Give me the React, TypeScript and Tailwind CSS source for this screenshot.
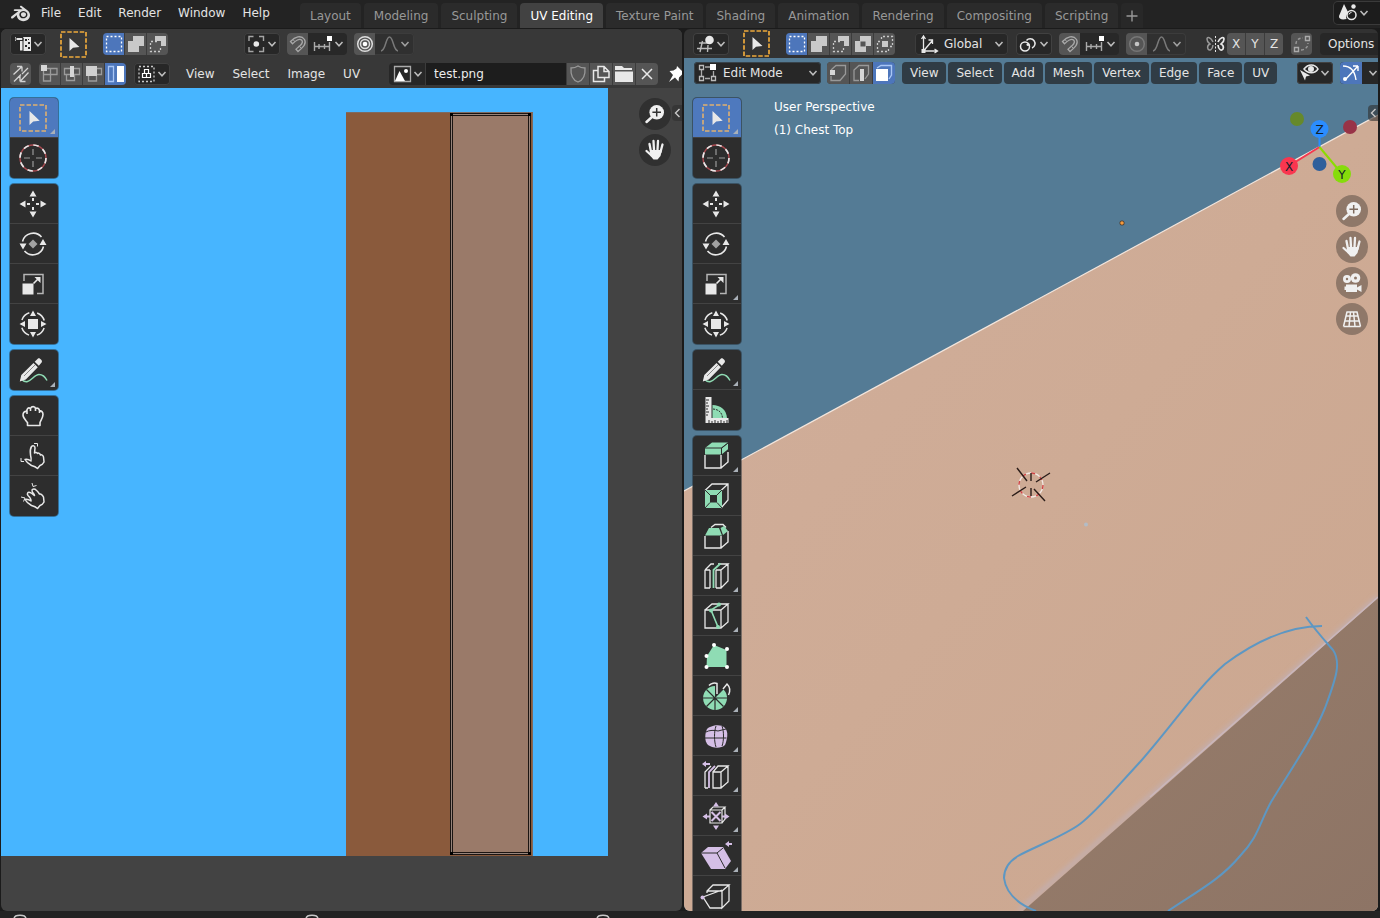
import type { ReactNode } from "react";
import { SiBlender } from "react-icons/si";

const workspaces = [
  "Layout",
  "Modeling",
  "Sculpting",
  "UV Editing",
  "Texture Paint",
  "Shading",
  "Animation",
  "Rendering",
  "Compositing",
  "Scripting",
];

const G = "#8fdcb4";
const P = "#d5bfe6";
const W = "#e8e8e8";

function Svg({ s = 22, children }: { s?: number; children: ReactNode }) {
  return (
    <svg width={s} height={s} viewBox={`0 0 ${s} ${s}`} fill="none" className="shrink-0" aria-hidden>
      {children}
    </svg>
  );
}

function Chevron() {
  return (
    <svg width="10" height="10" viewBox="0 0 10 10" fill="none" className="shrink-0" aria-hidden>
      <path d="M1.500 3 5 6.800 8.500 3" stroke="#bdbdbd" strokeWidth="1.500" />
    </svg>
  );
}

function Drop({ label, children }: { label: string; children: ReactNode }) {
  return (
    <button aria-label={label} className="flex h-[22px] w-9 shrink-0 items-center rounded bg-[#272727] pl-px ring-1 ring-inset ring-[#414141]">
      {children}
      <Chevron />
    </button>
  );
}

function Tile({ label, on, wide, children }: { label: string; on?: boolean; wide?: boolean; children: ReactNode }) {
  return (
    <button
      aria-label={label}
      className={`flex h-[22px] shrink-0 items-center justify-center ${wide ? "w-[22px]" : "w-[21px]"} ${on ? "bg-[#4d76bb]" : "bg-[#555555]"}`}
    >
      {children}
    </button>
  );
}

function Group({ children }: { children: ReactNode }) {
  return <div className="flex shrink-0 gap-px overflow-hidden rounded bg-[#3c3c3c]">{children}</div>;
}

/* header icons, 22px grid */

function TweakIcon() {
  return (
    <svg width="27" height="27" viewBox="0 0 27 27" fill="none" className="shrink-0" aria-hidden>
      <rect x="1" y="1" width="25" height="25" stroke="#eda93b" strokeWidth="1.7" strokeDasharray="4.5 1.75" />
      <path d="M9.500 7v13l3.500-3.300 6.500-.7z" fill={W} />
    </svg>
  );
}

function SelNew() {
  return (
    <Svg>
      <rect x="3.500" y="3.500" width="15" height="15" stroke="#fff" strokeWidth="1.3" strokeDasharray="2 2" />
    </Svg>
  );
}

function SelAdd() {
  return (
    <Svg>
      <path d="M8 3h11v10h-5v6H3V8h5z" fill="#c9c9c9" />
    </Svg>
  );
}

function SelSub() {
  return (
    <Svg>
      <path d="M8 3h11v10h-5V8H8z" fill="#c9c9c9" />
      <path d="M10 8.500H3.500v10h10v-4" stroke="#c9c9c9" strokeWidth="1.300" strokeDasharray="2 2" />
    </Svg>
  );
}

function SelDiff() {
  return (
    <Svg>
      <path fillRule="evenodd" d="M8 3h11v10h-5v6H3V8h5zM8.500 8.500v5h5v-5z" fill="#c9c9c9" />
    </Svg>
  );
}

function SelInt() {
  return (
    <Svg>
      <path d="M8 8h6v6H8z" fill="#c9c9c9" />
      <path d="M7.500 6V3.500h11v10H16M14.500 16v2.500h-11v-10H6" stroke="#c9c9c9" strokeWidth="1.300" strokeDasharray="2 2" />
    </Svg>
  );
}

function UvEditorIcon() {
  return (
    <Svg>
      <path d="M4 4h16v14H9V8H4z" fill={W} />
      <path d="M5 4.500h7v3H5zM8 7v11h4V5" stroke="#272727" />
      <path d="M14 6h2v2h-2zM17 9h2v2h-2zM14 12h2v2h-2zM17 6h1v1h-1zM17 14h2v2h-2z" fill="#272727" />
    </Svg>
  );
}

function ViewEditorIcon() {
  return (
    <Svg>
      <path d="M5 10h9M3 15.500h15M8.500 8 6 19M14 12l-.5 7" stroke="#bbb" strokeWidth="1.400" />
      <circle cx="15.500" cy="7" r="4.300" fill={W} />
    </Svg>
  );
}

function PivotIcon() {
  return (
    <Svg>
      <path d="M4 8V3.500h4.500M14 3.500h4.500V8M18.500 14v4.500H14M8.500 18.500H4V14" stroke="#a5a5a5" strokeWidth="1.400" />
      <circle cx="11.300" cy="11" r="2.800" fill={W} />
    </Svg>
  );
}

function PivotLinkIcon() {
  return (
    <Svg>
      <circle cx="8" cy="13.500" r="4.500" stroke={W} strokeWidth="1.500" />
      <path d="M9.500 7.500a4.800 4.800 0 1 1 5.500 7.500" stroke={W} strokeWidth="1.500" />
      <circle cx="11" cy="11.500" r="1.500" fill={W} />
    </Svg>
  );
}

function MagnetIcon() {
  return (
    <Svg>
      <path
        d="M3.500 8.500C8 4 14 1.500 17.500 6.500c2.500 4.500-2 8-6.500 12l-2-2.200c3.500-3.300 8-6 6-8.800C12.500 4.500 8.500 8 5.500 10.800z"
        stroke="#a8a8a8"
        strokeWidth="1.300"
      />
      <path d="m6 6.500 2 2.300M12 12.800l2.300 2.500" stroke="#a8a8a8" />
    </Svg>
  );
}

function SnapToIcon() {
  return (
    <Svg>
      <path d="M2.500 9v9M7 11v5M12.500 11v5M17.500 9v9M2.500 13.500h15" stroke="#aaa" strokeWidth="1.400" />
      <path d="M15 3h5v5h-5z" fill="#fff" />
    </Svg>
  );
}

function ProportionalIcon({ on }: { on?: boolean }) {
  return (
    <Svg>
      <circle cx="11" cy="11" r="7.300" stroke={on ? "#ddd" : "#777"} strokeWidth="1.500" />
      {on && <circle cx="11" cy="11" r="4.500" stroke="#ddd" strokeWidth="1.500" />}
      <circle cx="11" cy="11" r="2.300" fill={on ? "#fff" : "#c4c4c4"} />
    </Svg>
  );
}

function FalloffIcon() {
  return (
    <Svg>
      <path d="M3 18c5-.5 4.500-14 8.500-14s3.500 13.500 8.500 14" stroke="#8d8d8d" strokeWidth="1.500" />
    </Svg>
  );
}

function Snapping() {
  return (
    <div className="flex h-[22px] w-[60px] shrink-0 items-center overflow-hidden rounded bg-[#282828]">
      <Tile label="Snap">
        <MagnetIcon />
      </Tile>
      <button aria-label="Snapping" className="flex items-center pl-1">
        <SnapToIcon />
        <Chevron />
      </button>
    </div>
  );
}

function Proportional({ on }: { on?: boolean }) {
  return (
    <div className="flex h-[22px] w-[60px] shrink-0 items-center overflow-hidden rounded bg-[#303030] ring-1 ring-inset ring-[#3c3c3c]">
      <Tile label="Proportional editing">
        <ProportionalIcon on={on} />
      </Tile>
      <button aria-label="Falloff" className="flex items-center pl-[3px] opacity-80">
        <FalloffIcon />
        <Chevron />
      </button>
    </div>
  );
}

/* toolbar icons, 30px grid */

const tools: Record<string, ReactNode> = {
  "Select box": (
    <>
      <rect x="2" y="2" width="26" height="26" stroke="#e0b070" strokeWidth="1.600" strokeDasharray="4.500 2" />
      <path d="M11.500 8v14l3.700-3.500 6.500-.8z" fill={W} />
    </>
  ),
  Cursor: (
    <>
      <circle cx="15" cy="15" r="13" stroke="#a94a50" strokeWidth="1.400" />
      <circle cx="15" cy="15" r="13" stroke={W} strokeWidth="1.700" strokeDasharray="5.500 4.700" />
      <path d="M15 6v6M15 18v6M6 15h6M18 15h6" stroke="#999" strokeWidth="1.200" />
    </>
  ),
  Move: (
    <>
      <path d="m15 1.500 3.500 6h-7zM15 28.500l3.500-6h-7zM1.500 15l6-3.500v7zM28.500 15l-6-3.500v7z" fill={W} />
      <path d="M15 9v3M15 18v3M9 15h3M18 15h3" stroke={W} strokeWidth="2" />
    </>
  ),
  Rotate: (
    <>
      <path d="M4.500 12.500a11 11 0 0 1 19-4.500M25.500 17.500a11 11 0 0 1-19 4.500" stroke={W} strokeWidth="1.600" />
      <path d="M1.500 14.500h7l-3.500 6zM21.500 16h7L25 10z" fill={W} />
      <path d="m15 10.500 4.500 4.500-4.500 4.500-4.500-4.500z" fill="#a2a2a2" />
    </>
  ),
  Scale: (
    <>
      <path d="M6 12V5.500h19v19h-6" stroke="#b5b5b5" strokeWidth="1.500" />
      <path d="M4.500 14.500h11v11h-11zM22.500 8v6l-6-6z" fill={W} />
      <path d="m15.500 14.500 5-5" stroke={W} strokeWidth="1.600" />
    </>
  ),
  Transform: (
    <>
      <circle cx="15" cy="15" r="11.800" stroke={W} strokeWidth="1.500" strokeDasharray="10.500 8" strokeDashoffset="-4" />
      <path d="M10 10h10v10H10zM15 1.500l3 5.500h-6zM15 28.500l3-5.500h-6zM1.500 15 7 12v6zM28.500 15 23 12v6z" fill={W} />
    </>
  ),
  Annotate: (
    <>
      <path d="M3 24c8 8 12-4.500 18-4.500 4 0 6 2 8 6" stroke={G} strokeWidth="1.500" />
      <path d="m1.800 26.500 1.500-6.500L15.500 8l4.300 4.300L7.800 24.500zM16.700 6.800 20 3.500c1.500-1.200 4.800 2 3.800 3.800l-3 3.500z" fill={W} />
      <path d="m6 21 11-11" stroke="#888" />
    </>
  ),
  Grab: (
    <path
      d="M9.500 24.500v-3C7.500 19 5 17 5 14c0-2.500 1.500-4 4-3.500C8.500 7.500 10.500 6 12.500 7.500c1-2.500 4.500-2.500 5 0 2-1 4 0 4 2.500 2-.5 3.500 1 3.500 3.500 0 3-2 5.500-3 8v3zM9 10.500V13M12.500 7.500V10M17.500 7.500V10M21.500 10v2"
      stroke={W}
      strokeWidth="1.600"
      strokeLinejoin="round"
    />
  ),
  Relax: (
    <>
      <path
        d="M7 18.500c2-.5 4 0 6 1.500.5-2 0-4-.5-6C12 11 12 8 13.500 5.500c1.500-1.500 3.500-.5 3.500 1.500l-.5 5c1-1 2.500-.5 3 .5 1-1 2.500 0 3 1.500 1.500-.5 2.500.5 3 2l.5 5c-1 2-2.500 3-4 3.500L19.500 27.500c-2-2-4-2.500-6-3-2.500-1.500-5-3-6.500-6z"
        stroke={W}
        strokeWidth="1.500"
        strokeLinejoin="round"
      />
      <path d="M16 2.500h3.500v3M3 17v3.500h3" stroke={W} />
    </>
  ),
  Pinch: (
    <>
      <path
        d="M7 18.500c2-.5 4 0 6 1.500.5-2-1-3.500-3-5.500-1.500-2 0-4 2-3 2 .5 3 2 4.500 3 0-2-3-3-2.500-5.500.5-1.500 3-1.500 4 0 1.500 1 2.500 2.500 3.500 4 1.500-.5 3 1 4 3l.5 5c-1 2-2.500 3-4 3.500L19.500 27.500c-2-2-4-2.500-6-3-2.500-1.500-5-3-6.500-6z"
        stroke={W}
        strokeWidth="1.500"
        strokeLinejoin="round"
      />
      <path d="m14 2 1 3.500 3.500-1M3 16l4 1-1.500 3.500" stroke={W} />
    </>
  ),
  Measure: (
    <>
      <path d="M4.500 2h6v24h-6zM4.500 23h23v5h-23z" fill={W} />
      <path d="M5 5h3M5 8h2M5 11h3M5 14h2M5 17h3M5 20h2M8 28v-3M11 28v-2M14 28v-3M17 28v-2M20 28v-3M23 28v-2M26 28v-3" stroke="#2c2c2c" />
      <path d="M11.500 10c8 0 14 5 14.500 13H11.500z" fill={G} />
      <path d="M12 14c6 .5 9 3.500 9.500 9" stroke="#2c2c2c" strokeDasharray="2 1" />
    </>
  ),
  "Extrude region": (
    <>
      <path d="M4 14v13h16V14M20 27l7-6V11" stroke={W} strokeWidth="1.400" />
      <path d="m4 7 7-5.500h16l-7 5.500v6.500H4zM20.800 7.500 27 2.300v6l-6.200 5z" fill={G} />
      <path d="M4 7h16.500L27 2M20.500 7v6.500" stroke="#2c2c2c" />
    </>
  ),
  "Inset faces": (
    <>
      <path d="M4 9.500 11 3h16v16l-7 8M20 9.500 27 3" stroke={W} strokeWidth="1.300" />
      <path fillRule="evenodd" d="M4 9h17v18H4zM9 14v7.500h7V14z" fill={G} />
      <path d="m4 9 5 5M21 9l-5 5M4 27l5-5.500M21 27l-5-5.500" stroke="#2c2c2c" />
    </>
  ),
  Bevel: (
    <>
      <path d="M4 15v12h16V15M20 27l7-6V10M10 6.500 14 3.500h8l3 3" stroke={W} strokeWidth="1.400" />
      <path d="m4 14.500 4-7.500h10l3 7.500zM19.500 7 23 5l4 5-5 4z" fill={G} />
    </>
  ),
  "Loop cut": (
    <>
      <path d="M4 9v18h5M4 9l6-6h3M15 27h5V9h-5M9 9H4M20 9l7-6H17M27 3v17l-7 7M9 9v18M15 9v18" stroke={W} strokeWidth="1.300" />
      <path d="M12.500 27V9l7-6.500" stroke={G} strokeWidth="1.800" />
    </>
  ),
  Knife: (
    <>
      <path d="M4 9v18h16V9zM4 9l7-6h16l-7 6M27 3v18l-7 6" stroke={W} strokeWidth="1.300" />
      <path d="M18 4 10 9l7 17" stroke={G} strokeWidth="1.600" />
      <circle cx="18" cy="3.500" r="2" fill={G} />
      <circle cx="10" cy="9.500" r="2" fill={G} />
      <circle cx="17" cy="26" r="2" fill={G} />
    </>
  ),
  "Poly build": (
    <>
      <path d="m5.500 26 .5-11 7-11 12.500 5v17z" fill={G} />
      <circle cx="13" cy="4" r="2" fill="#fff" />
      <circle cx="26" cy="8" r="2" fill="#fff" />
      <circle cx="5.500" cy="15" r="2" fill="#fff" />
      <circle cx="5.500" cy="26" r="2" fill="#fff" />
      <circle cx="26" cy="26" r="2" fill="#fff" />
    </>
  ),
  Spin: (
    <>
      <path d="M14 17V5a12 12 0 1 0 8.500 3.500z" fill={G} />
      <path d="M8 4.500c2-2.500 6-3 8-2V13M22 8l4-5c3 3 3.500 7 1.500 11" stroke={W} strokeWidth="1.500" />
      <path d="M14 17v12M2 17h24M14 17 5.500 8.500M14 17l-8.500 8.500M14 17l8.500 8.500" stroke="#2c2c2c" strokeWidth="1.200" />
    </>
  ),
  Smooth: (
    <>
      <path d="M6 8c3-3 13-6 18-1 4 4 2 12 0 17-4 4-13 3-17 0-4-4-3-12-1-16z" fill={P} />
      <path d="M5 11c3-2 9-2 12-1l8-2M15 5c-2 6-2 15 0 21M21 5c2 5 2 15 0 20M3.500 17h22" stroke="#2c2c2c" />
    </>
  ),
  "Edge slide": (
    <>
      <path d="M12 11h8v16h-8zM12 11l5-6h10l-7 6M27 5v16l-7 6M4 27V11l6-6M4 27h3" stroke={W} strokeWidth="1.300" />
      <path d="M8 27V11l6-6" stroke={P} strokeWidth="1.800" />
      <path d="m1 3 4-3v2h4v2H5v2z" fill={P} />
    </>
  ),
  Shrink: (
    <>
      <path d="M9 9h12v13H9zM9 9l3-3h12l-3 3M24 6v12l-3 4" stroke={W} strokeWidth="1.200" />
      <path d="m15 1 3 4.500h-6zM15 29l3-4.500h-6zM1.500 15.500 6 12.500v6zM28.500 15.500 24 12.500v6z" fill={P} />
      <path d="m10.500 11 9 9M19.500 11l-9 9M6 15.500h3M21 15.500h3" stroke={P} strokeWidth="2" />
    </>
  ),
  Shear: (
    <>
      <path d="m0 12 7-6h15l8 14-6 8H10z" fill={P} />
      <path d="M0 12h16l8 15M16 12l6-5" stroke="#2c2c2c" />
      <path d="m24 3 4-3v2h3v2h-3v2z" fill={P} />
    </>
  ),
  "Rip region": (
    <>
      <path d="M6 12v-2l6-6h16l-7 6H6M21 10v17l7-7V4M21 27H9L2 16l19-7" stroke={W} strokeWidth="1.300" />
      <circle cx="1.500" cy="16.500" r="2" fill={P} />
    </>
  ),
};

const withMenu = ["Select box", "Annotate", "Extrude region", "Loop cut", "Knife", "Spin", "Smooth", "Edge slide", "Shrink", "Shear"];

function Toolbar({ groups, more = [] }: { groups: string[][]; more?: string[] }) {
  return (
    <div className="relative flex w-12 shrink-0 flex-col gap-[6px]">
      {groups.map((group) => (
        <div key={group[0]} className="overflow-hidden rounded bg-[#2d2d2d] ring-1 ring-[#222c33]/50">
          {group.map((name) => (
            <button
              key={name}
              aria-label={name}
              className={`relative flex h-10 w-full items-center justify-center border-b border-[#434343] pr-[3px] last:border-b-0 ${name === "Select box" ? "bg-[#4e79be]" : ""}`}
            >
              <svg width="30" height="30" viewBox="0 0 30 30" fill="none" className="overflow-visible" aria-hidden>
                {tools[name]}
              </svg>
              {(withMenu.includes(name) || more.includes(name)) && (
                <svg width="5" height="5" viewBox="0 0 5 5" className="absolute right-[3px] bottom-[3px]" aria-hidden>
                  <path d="M5 0v5H0z" fill="#a9b0b8" />
                </svg>
              )}
            </button>
          ))}
        </div>
      ))}
    </div>
  );
}

/* round navigation buttons */

function NavButton({ label, dark, children }: { label: string; dark?: boolean; children: ReactNode }) {
  return (
    <button
      aria-label={label}
      className={`flex size-8 items-center justify-center rounded-full ${dark ? "bg-[#303030]" : "bg-[#8f7869]"}`}
    >
      <Svg s={24}>{children}</Svg>
    </button>
  );
}

function ZoomGlyph({ dark }: { dark?: boolean }) {
  return (
    <>
      <path d="m9.500 14.500-6 5.500" stroke="#f0f0f0" strokeWidth="2.500" strokeLinecap="round" />
      <circle cx="13.700" cy="10.300" r="7.300" fill="#f0f0f0" />
      <path d="M13.700 6v8.600M9.400 10.300H18" stroke={dark ? "#333" : "#7d6a5d"} strokeWidth="1.500" />
    </>
  );
}

function HandGlyph() {
  return (
    <>
      <path d="m8 14-1.500-8M11 12l-.5-9M14.500 12l.5-9M17.500 14l2-7.500M8.500 17.500l-5-4.500" stroke="#f0f0f0" strokeWidth="2.300" strokeLinecap="round" />
      <path d="M7 12h12l-1.500 6-3 3.500h-4L7.500 18z" fill="#f0f0f0" />
    </>
  );
}

function SideArrow() {
  return (
    <button aria-label="Show sidebar" className="absolute top-[17px] right-0 flex h-4 w-[10px] items-center justify-center rounded-l bg-[#2e2e2e]/60">
      <svg width="7" height="12" viewBox="0 0 7 12" fill="none" aria-hidden>
        <path d="M5.500 2 1.500 6l4 4" stroke="#c8c8c8" strokeWidth="1.400" />
      </svg>
    </button>
  );
}

function AxisGizmo() {
  return (
    <svg width="92" height="80" viewBox="0 0 92 80" className="mt-[10px] mb-[3px]" aria-hidden>
      <circle cx="21" cy="11" r="7" fill="#66892b" />
      <circle cx="74" cy="19" r="7" fill="#983347" />
      <circle cx="43.500" cy="56" r="7" fill="#2f5f9b" />
      <path d="M43.500 39V24" stroke="#2b8dff" strokeWidth="2" />
      <path d="M43.500 39 13 58" stroke="#f5384f" strokeWidth="2" />
      <path d="m43.500 39 22.500 27" stroke="#8bdc00" strokeWidth="2" />
      <circle cx="43.500" cy="21" r="9" fill="#2b8dff" />
      <circle cx="13" cy="58" r="9" fill="#f9364f" />
      <circle cx="66" cy="66" r="9" fill="#86dc0b" />
      <g fontSize="12" textAnchor="middle" fill="#10202c">
        <text x="43.500" y="25.500">Z</text>
        <text x="13" y="62.500">X</text>
        <text x="66" y="70.500">Y</text>
      </g>
    </svg>
  );
}

function TopBar() {
  return (
    <header className="flex h-7 shrink-0 items-start overflow-hidden bg-[#232323]">
      <button aria-label="Blender" className="flex h-[26px] w-8 shrink-0 items-center justify-end pr-[2px]">
        <SiBlender size={19} color="#dedede" />
      </button>
      <nav className="flex h-[26px] w-[268px] shrink-0 gap-px pl-px text-[#e4e4e4]">
        {["File", "Edit", "Render", "Window", "Help"].map((m) => (
          <button key={m} className="px-2">
            {m}
          </button>
        ))}
      </nav>
      <div className="flex shrink-0 gap-[3px] pt-[3px]">
        {workspaces.map((w) => (
          <button
            key={w}
            className={`h-[25px] rounded-t px-[10px] ${w === "UV Editing" ? "bg-[#424242] text-white" : "bg-[#2b2b2b] text-[#989898]"}`}
          >
            {w}
          </button>
        ))}
        <button aria-label="Add workspace" className="flex h-[25px] w-[22px] items-center justify-center rounded-t bg-[#282828]">
          <Svg s={12}>
            <path d="M6 .5v11M.5 6h11" stroke="#989898" strokeWidth="1.400" />
          </Svg>
        </button>
      </div>
      <button aria-label="Scene" className="mt-[2px] ml-auto flex h-[22px] w-[46px] shrink-0 items-center rounded-l bg-[#1c1c1c] pl-[3px] ring-1 ring-[#3a3a3a]">
        <Svg>
          <path d="m7 2 4.500 9a5 5 0 0 0-2 6C5 18 1.500 17 2 14z" fill={W} />
          <circle cx="16.500" cy="4.500" r="2.200" fill={W} />
          <circle cx="14.500" cy="13" r="4.500" stroke={W} strokeWidth="1.500" />
          <path d="M12 12.500a2.500 2.500 0 0 1 2.500-2" stroke={W} />
        </Svg>
        <Chevron />
      </button>
    </header>
  );
}

function UvEditor() {
  return (
    <section className="flex min-w-0 flex-[681_1_0] flex-col overflow-hidden rounded-md bg-[#434343]">
      <div className="flex h-[30px] shrink-0 items-center bg-[#383838] pl-[9px]">
        <Drop label="Editor type">
          <UvEditorIcon />
        </Drop>
        <button aria-label="Tweak" className="mr-4 ml-[14px]">
          <TweakIcon />
        </button>
        <Group>
          <Tile label="Set selection" on>
            <SelNew />
          </Tile>
          <Tile label="Extend selection">
            <SelAdd />
          </Tile>
          <Tile label="Subtract selection">
            <SelSub />
          </Tile>
        </Group>
        <div className="ml-[76px] flex gap-[7px]">
          <Drop label="Pivot">
            <PivotIcon />
          </Drop>
          <Snapping />
          <Proportional on />
        </div>
      </div>
      <div className="flex h-[29px] shrink-0 items-center bg-[#383838] pl-[9px]">
        <div className="flex shrink-0 gap-2">
          <Group>
            <Tile label="Sync selection">
              <Svg>
                <path
                  d="M3.500 11.500 12 3.500M12 3.500H7M12 3.500v5M4 18.500l7-7M10 18.500l8.500-9M10 18.500h5.500M10 18.500V13M12 11l6-6"
                  stroke="#d2d2d2"
                  strokeWidth="1.300"
                />
              </Svg>
            </Tile>
          </Group>
          <Group>
            <Tile label="Vertex">
              <Svg>
                <path d="M8 5.500h10v6H4.500V8M4.500 11v7h7V5.500" stroke="#9b9b9b" strokeWidth="1.300" />
                <path d="M2 2h6v6H2z" fill="#d6d6d6" />
              </Svg>
            </Tile>
            <Tile label="Edge">
              <Svg>
                <path d="M3.500 5.500h15v6h-15zM5.500 11.500v6h8v-6" stroke="#9b9b9b" strokeWidth="1.300" />
                <path d="M9 3h4v11H9z" fill="#d6d6d6" />
              </Svg>
            </Tile>
            <Tile label="Face">
              <Svg>
                <path d="M14 5.500h4.500v6h-5M5.500 13v5h8v-5" stroke="#9b9b9b" strokeWidth="1.300" />
                <path d="M3 3h11v10H3z" fill="#d0d0d0" />
              </Svg>
            </Tile>
            <Tile label="Island" on>
              <Svg>
                <path d="M3.500 3.500h5v15h-5z" stroke="#a9c6f5" strokeWidth="1.300" />
                <path d="M12 3h7v16h-7z" fill="#fff" />
              </Svg>
            </Tile>
          </Group>
          <Drop label="Sticky selection">
            <Svg>
              <path d="M4 3.500h15v15H4z" stroke="#c9c9c9" strokeWidth="1.300" strokeDasharray="2 2" />
              <path d="M9.500 6.500h4v4h-4zM7.500 10.500h4v4h-4zM11.500 10.500h4v4h-4z" stroke="#fff" strokeWidth="1.200" />
            </Svg>
          </Drop>
        </div>
        <nav className="ml-[7px] flex shrink-0 text-[#e4e4e4]">
          {["View", "Select", "Image", "UV"].map((m) => (
            <button key={m} className="px-[9px]">
              {m}
            </button>
          ))}
        </nav>
        <div className="ml-5 flex shrink-0 gap-px overflow-hidden rounded bg-[#3c3c3c]">
          <button aria-label="Browse image" className="flex h-[22px] w-9 items-center bg-[#272727] pl-[2px]">
            <Svg>
              <path d="M3.500 3.500h16v15h-16z" stroke="#aaa" strokeWidth="1.300" />
              <path d="m4 18 4.500-10L14 18z" fill="#fff" />
              <circle cx="15" cy="8" r="2" fill="#fff" />
            </Svg>
            <Chevron />
          </button>
          <input
            aria-label="Image name"
            defaultValue="test.png"
            className="h-[22px] w-[140px] bg-[#1d1d1d] pl-2 text-[#ececec] outline-none"
          />
          <Tile label="Fake user" wide>
            <Svg>
              <path d="M11 3c2.500 1.800 5 2 7 2 .5 7-1.500 12-7 14C5.500 17 3.500 12 4 5c2 0 4.500-.2 7-2z" stroke="#999" strokeWidth="1.300" />
            </Svg>
          </Tile>
          <Tile label="New image" wide>
            <Svg>
              <path d="M8 3.500h6l5 5v6H8zM14 3.500v5h5M8 7.500H3.500v11h11v-4" stroke={W} strokeWidth="1.500" />
            </Svg>
          </Tile>
          <Tile label="Open image" wide>
            <Svg>
              <path d="M2 3h7l2 2h8v2H2zM2 8.500h18V19H2z" fill={W} />
            </Svg>
          </Tile>
          <Tile label="Unlink" wide>
            <Svg>
              <path d="m6 6 10 10M16 6 6 16" stroke={W} strokeWidth="1.500" />
            </Svg>
          </Tile>
        </div>
        <button aria-label="Pin" className="ml-2">
          <Svg>
            <path d="m11 3 8 8-3 .5-3 3-.5 4-3.500-4L3 19l4-7-3.500-4 4-.5 3-2z" fill="#fff" />
          </Svg>
        </button>
      </div>
      <div className="relative flex min-h-0 flex-1 items-start justify-between overflow-hidden pt-[10px] pr-[11px] pl-[9px]">
        <div className="absolute top-0 left-0 flex h-[768px] w-[607px] justify-end bg-[#47b5ff] pt-6 pr-[75px]">
          <svg width="187" height="744" viewBox="0 0 187 744" className="bg-[#8a5a3c]" fill="none" aria-hidden>
            <path d="M0 .5h186.500V744" stroke="#7f6a60" />
            <rect x="106" y="3" width="77" height="738" fill="#9a7a69" />
            <rect x="105.500" y="2.500" width="78" height="739" stroke="#1c1512" strokeWidth="3" />
            <rect x="105.500" y="2.500" width="78" height="739" stroke="#97847b" />
            <path d="M104 1h3v3h-3zM182 1h3v3h-3zM104 740h3v3h-3zM182 740h3v3h-3z" fill="#000" />
          </svg>
        </div>
        <Toolbar
          groups={[
            ["Select box", "Cursor"],
            ["Move", "Rotate", "Scale", "Transform"],
            ["Annotate"],
            ["Grab", "Relax", "Pinch"],
          ]}
        />
        <div className="relative flex flex-col gap-1">
          <NavButton label="Zoom" dark>
            <ZoomGlyph dark />
          </NavButton>
          <NavButton label="Pan" dark>
            <HandGlyph />
          </NavButton>
        </div>
        <SideArrow />
      </div>
    </section>
  );
}

function Scene() {
  return (
    <svg
      className="absolute inset-0 h-full w-full"
      viewBox="684 58 694 853"
      preserveAspectRatio="xMinYMin slice"
      fill="none"
      aria-hidden
    >
      <defs>
        <linearGradient id="top" x1="0" y1="0" x2="1" y2="1">
          <stop offset="0" stopColor="#d1ae9b" />
          <stop offset="0.5" stopColor="#ceab95" />
          <stop offset="1" stopColor="#cba68f" />
        </linearGradient>
        <linearGradient id="side" x1="0" y1="0" x2="1" y2="1">
          <stop offset="0.4" stopColor="#947a69" />
          <stop offset="1" stopColor="#8d7465" />
        </linearGradient>
        <filter id="soft">
          <feGaussianBlur stdDeviation="2" />
        </filter>
      </defs>
      <path d="M684 58h694v853H684z" fill="#547b95" />
      <path d="M684 491 1378 115v796H684z" fill="url(#top)" />
      <path d="M684 491 1378 115" stroke="#f3e6dd" strokeWidth="1.200" />
      <path d="M1019 911 1378 597" stroke="#c4adaa" strokeWidth="5" filter="url(#soft)" />
      <path d="M1378 598v313h-355z" fill="url(#side)" />
      <path d="M1150 797 1378 597" stroke="#c9b6bb" strokeWidth="1.500" />
      <path
        d="M1322 626c-28 0-62 12-97 38-28 24-50 58-85 98-26 28-44 50-60 62s-48 24-62 32c-10 6-14 14-14 22 2 16 14 26 32 33M1306 617c10 14 20 25 27 33 8 12 4 26-8 58-14 34-36 64-54 94-12 22-12 34-31 54-20 24-44 36-72 55"
        stroke="#5d97c3"
        strokeWidth="2"
      />
      <circle cx="1031" cy="485" r="12" stroke="#f3e9e4" strokeWidth="1.300" />
      <circle cx="1031" cy="485" r="12" stroke="#d04545" strokeWidth="1.400" strokeDasharray="4 5.400" />
      <path d="m1017 468 10 13M1050 473l-14 9M1012 496l14-9M1034 489l11 12M1031 473v8M1031 488v8" stroke="#2b1d19" strokeWidth="1.400" />
      <circle cx="1122" cy="223" r="2.500" fill="#4a3a2c" />
      <circle cx="1122" cy="223" r="1.800" fill="#f59a3c" />
      <circle cx="1086" cy="524.500" r="2" fill="#b3bcc6" />
    </svg>
  );
}

function Viewport() {
  return (
    <section className="relative flex min-w-0 flex-[694_1_0] flex-col overflow-hidden rounded-md">
      <div className="flex h-[29px] shrink-0 items-center gap-2 bg-[#323232] pl-[9px]">
        <Drop label="Editor type">
          <ViewEditorIcon />
        </Drop>
        <button aria-label="Tweak" className="mr-2 ml-[6px]">
          <TweakIcon />
        </button>
        <Group>
          <Tile label="Set selection" on>
            <SelNew />
          </Tile>
          <Tile label="Extend selection">
            <SelAdd />
          </Tile>
          <Tile label="Subtract selection">
            <SelSub />
          </Tile>
          <Tile label="Invert selection">
            <SelDiff />
          </Tile>
          <Tile label="Intersect selection">
            <SelInt />
          </Tile>
        </Group>
        <div className="relative ml-3 flex shrink-0 items-center">
          <select aria-label="Orientation" className="h-[22px] w-[93px] appearance-none rounded bg-[#272727] pl-[29px] text-[#e4e4e4] ring-1 ring-inset ring-[#3c3c3c]">
            <option>Global</option>
          </select>
          <div className="pointer-events-none absolute inset-0 flex items-center justify-between pr-1 pl-1">
            <Svg>
              <path d="M4.500 3v15H18M4.500 18 13 8M2.500 6l2-3 2 3M15.500 16l3 2-3 2M9.500 7h4v4" stroke={W} strokeWidth="1.300" />
              <path d="M2.500 16h4v4h-4z" fill={W} />
            </Svg>
            <Chevron />
          </div>
        </div>
        <div className="flex shrink-0 gap-[7px]">
          <Drop label="Pivot">
            <PivotLinkIcon />
          </Drop>
          <Snapping />
          <Proportional />
        </div>
        <div className="ml-[10px] flex shrink-0 items-center">
          <Svg>
            <path d="M9 9C7 4 3 3.500 3 6c0 3 2 4 3 5-2 1-3 2.500-2 5 1.500 2 4.500 1 5-4" stroke="#999" strokeWidth="1.500" />
            <path d="M11.500 3v16" stroke={W} strokeDasharray="2 1.500" />
            <path d="M14 9c2-5 6-5.500 6-3 0 3-2 4-3 5 2 1 3 2.500 2 5-1.500 2-4.500 1-5-4" stroke={W} strokeWidth="1.700" />
          </Svg>
          <div className="ml-px flex gap-px overflow-hidden rounded bg-[#3c3c3c]">
            {["X", "Y", "Z"].map((a) => (
              <button key={a} className="h-[22px] w-[18px] bg-[#555555] text-[#e4e4e4]">
                {a}
              </button>
            ))}
          </div>
        </div>
        <Group>
          <Tile label="Auto merge">
            <Svg>
              <path d="M3.500 14.500h4v4h-4zM14.500 3.500h4v4h-4z" stroke="#aaa" strokeWidth="1.400" />
              <path d="M5 11c0-4 3-6 7-6M10 17c4 0 7-3 7-7" stroke="#999" strokeWidth="1.400" strokeDasharray="3 2" />
            </Svg>
          </Tile>
        </Group>
        <button className="h-[22px] w-24 shrink-0 rounded bg-[#272727] pl-2 text-left text-[#e4e4e4]">Options</button>
      </div>

      <div className="relative flex min-h-0 flex-1 flex-col overflow-hidden">
        <Scene />
        <div className="relative flex h-[30px] shrink-0 items-center pl-[10px]">
          <div className="relative flex shrink-0 items-center">
            <select aria-label="Mode" className="h-[22px] w-[127px] appearance-none rounded bg-[#272727] pl-[29px] text-[#e4e4e4] ring-1 ring-inset ring-[#38434b]">
              <option>Edit Mode</option>
            </select>
            <div className="pointer-events-none absolute inset-0 flex items-center justify-between pr-[3px] pl-[3px]">
              <Svg>
                <path d="M8 5h5M4.500 8v6M16.500 9v5M8 16.500h5" stroke="#aaa" strokeWidth="1.300" />
                <path d="M2.500 3.500h4v4h-4zM2.500 14.500h4v4h-4zM14.500 14.500h4v4h-4z" stroke="#bbb" strokeWidth="1.300" />
                <path d="M13 2h6v6h-6z" fill="#fff" />
              </Svg>
              <Chevron />
            </div>
          </div>
          <div className="ml-[6px]">
            <Group>
              <Tile label="Vertex select" wide>
                <Svg>
                  <path d="M4 8 9 3.500h9.500V12L13 18.500H4V14" stroke="#999" strokeWidth="1.300" />
                  <path d="M3 8h5v5H3z" fill="#d6d6d6" />
                </Svg>
              </Tile>
              <Tile label="Edge select" wide>
                <Svg>
                  <path d="M9 18.500H4V8l5-4.500h9.500V12L15 17" stroke="#999" strokeWidth="1.300" />
                  <path d="M10 7h4v12h-4z" fill="#d6d6d6" />
                </Svg>
              </Tile>
              <Tile label="Face select" on wide>
                <Svg>
                  <path d="m4 6 4-2.500h10.500V13L16 17" stroke="#a9c6f5" strokeWidth="1.400" />
                  <path d="M3 7h12v12H3z" fill="#fff" />
                </Svg>
              </Tile>
            </Group>
          </div>
          <nav className="ml-[7px] flex shrink-0 gap-[2px] text-[#e4e4e4]">
            {["View", "Select", "Add", "Mesh", "Vertex", "Edge", "Face", "UV"].map((m) => (
              <button key={m} className="h-[22px] rounded bg-[#303c45] px-2">
                {m}
              </button>
            ))}
          </nav>
          <div className="ml-auto flex shrink-0 items-center gap-[7px]">
            <Drop label="Visibility">
              <Svg>
                <path d="M6 7c4-5.500 11-5.500 14 0-3 5-10 5-14 0z" stroke={W} strokeWidth="1.500" />
                <circle cx="13" cy="7" r="3" fill={W} />
                <path d="m2 8 10 5.500-4 1-1 4z" fill={W} />
              </Svg>
            </Drop>
            <div className="flex h-[22px] w-[38px] items-center overflow-hidden rounded-l bg-[#272727]">
              <Tile label="Gizmos" on wide>
                <Svg>
                  <path d="M3 4c8 0 12 6 13 14M5 18 18 4M18 4h-5M18 4v5" stroke="#fff" strokeWidth="1.400" />
                  <circle cx="5" cy="17" r="2" fill="#fff" />
                </Svg>
              </Tile>
              <button aria-label="Gizmo options" className="pl-[6px]">
                <Chevron />
              </button>
            </div>
          </div>
        </div>
        <div className="relative flex min-h-0 flex-1 items-start overflow-hidden pt-[10px] pr-[10px] pl-[9px]">
          <Toolbar
            more={["Scale"]}
            groups={[
              ["Select box", "Cursor"],
              ["Move", "Rotate", "Scale", "Transform"],
              ["Annotate", "Measure"],
              [
                "Extrude region",
                "Inset faces",
                "Bevel",
                "Loop cut",
                "Knife",
                "Poly build",
                "Spin",
                "Smooth",
                "Edge slide",
                "Shrink",
                "Shear",
                "Rip region",
              ],
            ]}
          />
          <div className="ml-[33px] text-white">
            <p className="leading-[18px]">User Perspective</p>
            <p className="mt-[5px] leading-[18px]">(1) Chest Top</p>
          </div>
          <div className="ml-auto flex flex-col items-end gap-1">
            <AxisGizmo />
            <NavButton label="Zoom">
              <ZoomGlyph />
            </NavButton>
            <NavButton label="Pan">
              <HandGlyph />
            </NavButton>
            <NavButton label="Camera">
              <circle cx="7" cy="8" r="4" fill="#f0f0f0" />
              <circle cx="15.500" cy="7" r="4.800" fill="#f0f0f0" />
              <circle cx="7" cy="8" r="1.200" fill="#8f7869" />
              <circle cx="15.500" cy="7" r="1.500" fill="#8f7869" />
              <path d="M6 13.500h11v3l4.500-2.500v7L17 18.500V21H6v-2H4.500v-3.500H6z" fill="#f0f0f0" />
            </NavButton>
            <NavButton label="Perspective">
              <path
                d="M6.500 5h11M5.500 9h13M4.500 14h15M3.500 19.500h17M7 5 3.500 19.500M10.500 5 9 19.500M13.500 5 15 19.500M17 5l3.500 14.500"
                stroke="#f0f0f0"
                strokeWidth="1.500"
              />
            </NavButton>
          </div>
          <SideArrow />
        </div>
      </div>
    </section>
  );
}

function MouseHint() {
  return (
    <svg width="14" height="4" viewBox="0 0 14 4" fill="none" aria-hidden>
      <path d="M1 5c0-5 12-5 12 0" stroke="#c9c9c9" strokeWidth="1.400" />
    </svg>
  );
}

export default function App() {
  return (
    <div className="flex h-screen flex-col overflow-hidden bg-[#1b1b1b] font-['DejaVu_Sans',sans-serif] text-xs">
      <TopBar />
      <main className="flex min-h-0 flex-1 gap-[2px] pt-px pr-[2px] pl-px">
        <UvEditor />
        <Viewport />
      </main>
      <footer className="flex h-[7px] shrink-0 items-end bg-[#232323] pl-[13px]">
        <div className="w-[292px]">
          <MouseHint />
        </div>
        <div className="w-[291px]">
          <MouseHint />
        </div>
        <MouseHint />
      </footer>
    </div>
  );
}
